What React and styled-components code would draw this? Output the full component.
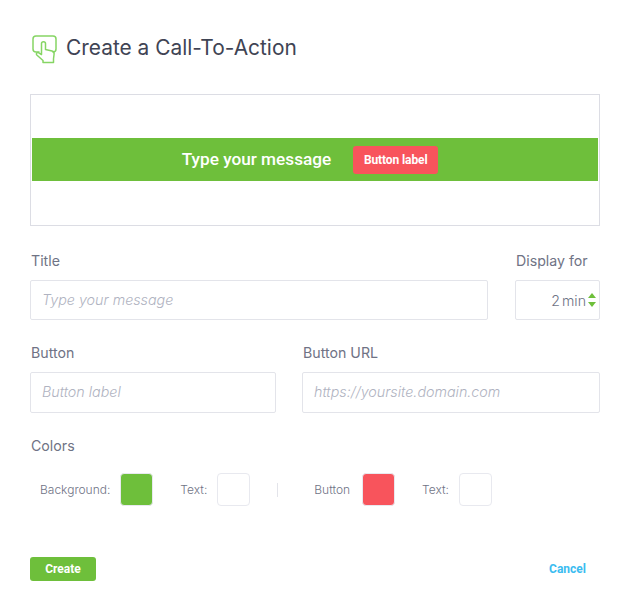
import React from 'react';
import styled, { createGlobalStyle } from 'styled-components';

const GREEN = '#6ebf3b';
const RED = '#f8545c';

const GlobalStyle = createGlobalStyle`
  html, body {
    margin: 0;
    padding: 0;
    background: #fff;
  }
  * {
    box-sizing: border-box;
  }
`;

const HandIcon = () => (
  <IconSvg width="25" height="29" viewBox="0 0 25 29" fill="none" stroke="#86d564" strokeWidth="1.5" strokeLinejoin="round" strokeLinecap="round">
    <path d="M7 17H4C2.3 17 1 15.7 1 14V4C1 2.3 2.3 1 4 1H21C22.7 1 24 2.3 24 4V14C24 15.7 22.7 17 21 17" />
    <path d="M9.5 19V8.5C9.5 6 13.5 6 13.5 8.5V14.5L20 16C21.5 16.4 22.3 17.5 22.1 19L21.5 24V27.5H11V25.5L4.8 20C3.5 18.6 5.3 16.8 6.8 17.8L9.5 19.5" />
  </IconSvg>
);

const App = () => {
  return (
    <>
      <GlobalStyle />
      <Page>
        <Header>
          <HandIcon />
          <Heading>Create a Call-To-Action</Heading>
        </Header>

        <Preview>
          <Banner>
            <BannerText>Type your message</BannerText>
            <BannerButton>Button label</BannerButton>
          </Banner>
        </Preview>

        <TitleRow>
          <Field>
            <Label>Title</Label>
            <Input placeholder="Type your message" />
          </Field>
          <Field>
            <Label>Display for</Label>
            <DurationBox>
              <DurationValue>2</DurationValue>
              <DurationUnit>min</DurationUnit>
              <Stepper>
                <ArrowUp />
                <ArrowDown />
              </Stepper>
            </DurationBox>
          </Field>
        </TitleRow>

        <ButtonRow>
          <Field>
            <Label>Button</Label>
            <Input $tall placeholder="Button label" />
          </Field>
          <Field>
            <Label>Button URL</Label>
            <Input $tall placeholder="https://yoursite.domain.com" />
          </Field>
        </ButtonRow>

        <Label>Colors</Label>
        <ColorRow>
          <ColorLabel>Background:</ColorLabel>
          <Swatch $color={GREEN} />
          <ColorLabel $gap={27}>Text:</ColorLabel>
          <Swatch />
          <Divider />
          <ColorLabel $after={12}>Button</ColorLabel>
          <Swatch $color={RED} />
          <ColorLabel $gap={27}>Text:</ColorLabel>
          <Swatch />
        </ColorRow>

        <Footer>
          <CreateButton>Create</CreateButton>
          <CancelLink>Cancel</CancelLink>
        </Footer>
      </Page>
    </>
  );
};

export default App;

const Page = styled.div`
  width: 632px;
  height: 600px;
  padding: 32px 32px 0 30px;
  font-family: Inter, 'Noto Sans', sans-serif;
  background: #fff;
  overflow: hidden;
`;

const Header = styled.div`
  display: flex;
  align-items: center;
  gap: 9px;
  height: 30px;
  padding-left: 2px;
`;

const IconSvg = styled.svg`
  flex: none;
  margin-top: 4px;
`;

const Heading = styled.h1`
  margin: 0;
  font-size: 20.9px;
  font-weight: 400;
  color: #3f4454;
`;

const Preview = styled.div`
  display: flex;
  align-items: center;
  height: 132px;
  margin-top: 32px;
  padding: 0 1px 1px;
  border: 1px solid #dcdde4;
`;

const Banner = styled.div`
  display: flex;
  align-items: center;
  justify-content: center;
  gap: 22px;
  width: 100%;
  height: 43px;
  padding-right: 10px;
  background: ${GREEN};
`;

const BannerText = styled.span`
  margin-bottom: 1px;
  font-family: Roboto, sans-serif;
  font-size: 17.2px;
  font-weight: 500;
  color: #fff;
`;

const BannerButton = styled.span`
  display: flex;
  align-items: center;
  justify-content: center;
  width: 85px;
  height: 28px;
  border-radius: 3px;
  font-family: Roboto, sans-serif;
  font-size: 12px;
  font-weight: 700;
  letter-spacing: -0.1px;
  color: #fff;
  background: ${RED};
`;

const TitleRow = styled.div`
  display: grid;
  grid-template-columns: 458px 85px;
  justify-content: space-between;
  margin-top: 25px;
`;

const ButtonRow = styled.div`
  display: grid;
  grid-template-columns: 246px 298px;
  justify-content: space-between;
  margin-top: 23px;
  margin-bottom: 23px;
`;

const Field = styled.div`
  display: flex;
  flex-direction: column;
  min-width: 0;
`;

const Label = styled.div`
  height: 20px;
  padding-left: 1px;
  font-size: 14.2px;
  line-height: 20px;
  color: #6f7385;
`;

const Input = styled.input`
  width: 100%;
  height: ${props => (props.$tall ? '41px' : '40px')};
  margin-top: 9px;
  padding: 0 11px 2px;
  border: 1px solid #e3e4ea;
  border-radius: 2px;
  outline: none;
  font-family: Inter, sans-serif;
  font-size: 14.3px;
  font-weight: 300;
  font-style: italic;
  color: #6f7385;

  &::placeholder {
    color: #b0b3c1;
    opacity: 1;
  }
`;

const DurationBox = styled.div`
  display: flex;
  align-items: center;
  justify-content: flex-end;
  height: 40px;
  margin-top: 9px;
  padding-right: 3px;
  border: 1px solid #e3e4ea;
  border-radius: 2px;
  font-size: 14.2px;
  font-weight: 300;
  color: #6f7385;
`;

const DurationValue = styled.span`
  margin-right: 2px;
`;

const DurationUnit = styled.span`
  margin-right: 2px;
`;

const Stepper = styled.div`
  display: flex;
  flex-direction: column;
  gap: 4px;
`;

const ArrowUp = styled.span`
  width: 0;
  height: 0;
  border-left: 4px solid transparent;
  border-right: 4px solid transparent;
  border-bottom: 5px solid ${GREEN};
`;

const ArrowDown = styled(ArrowUp)`
  border-bottom: 0;
  border-top: 5px solid ${GREEN};
`;

const ColorRow = styled.div`
  display: flex;
  align-items: center;
  margin-top: 17px;
  padding-left: 10px;
`;

const ColorLabel = styled.span`
  margin-left: ${props => props.$gap || 0}px;
  margin-right: ${props => props.$after || 10}px;
  font-size: 12px;
  font-weight: 300;
  color: #6f7385;
`;

const Swatch = styled.div`
  width: 33px;
  height: 33px;
  border: 1px solid #e8e9ef;
  border-radius: 4px;
  background: ${props => props.$color || '#fff'};
`;

const Divider = styled.div`
  width: 1px;
  height: 14px;
  margin: 0 36px 0 27px;
  background: #e3e4ea;
`;

const Footer = styled.div`
  display: flex;
  align-items: center;
  justify-content: space-between;
  margin-top: 51px;
  padding-right: 14px;
`;

const CreateButton = styled.button`
  width: 66px;
  height: 24px;
  padding: 0;
  border: 0;
  border-radius: 3px;
  font-family: Roboto, sans-serif;
  font-size: 12px;
  font-weight: 700;
  color: #fff;
  background: ${GREEN};
`;

const CancelLink = styled.a`
  font-family: Roboto, sans-serif;
  font-size: 12px;
  font-weight: 700;
  color: #3bbcf0;
`;
